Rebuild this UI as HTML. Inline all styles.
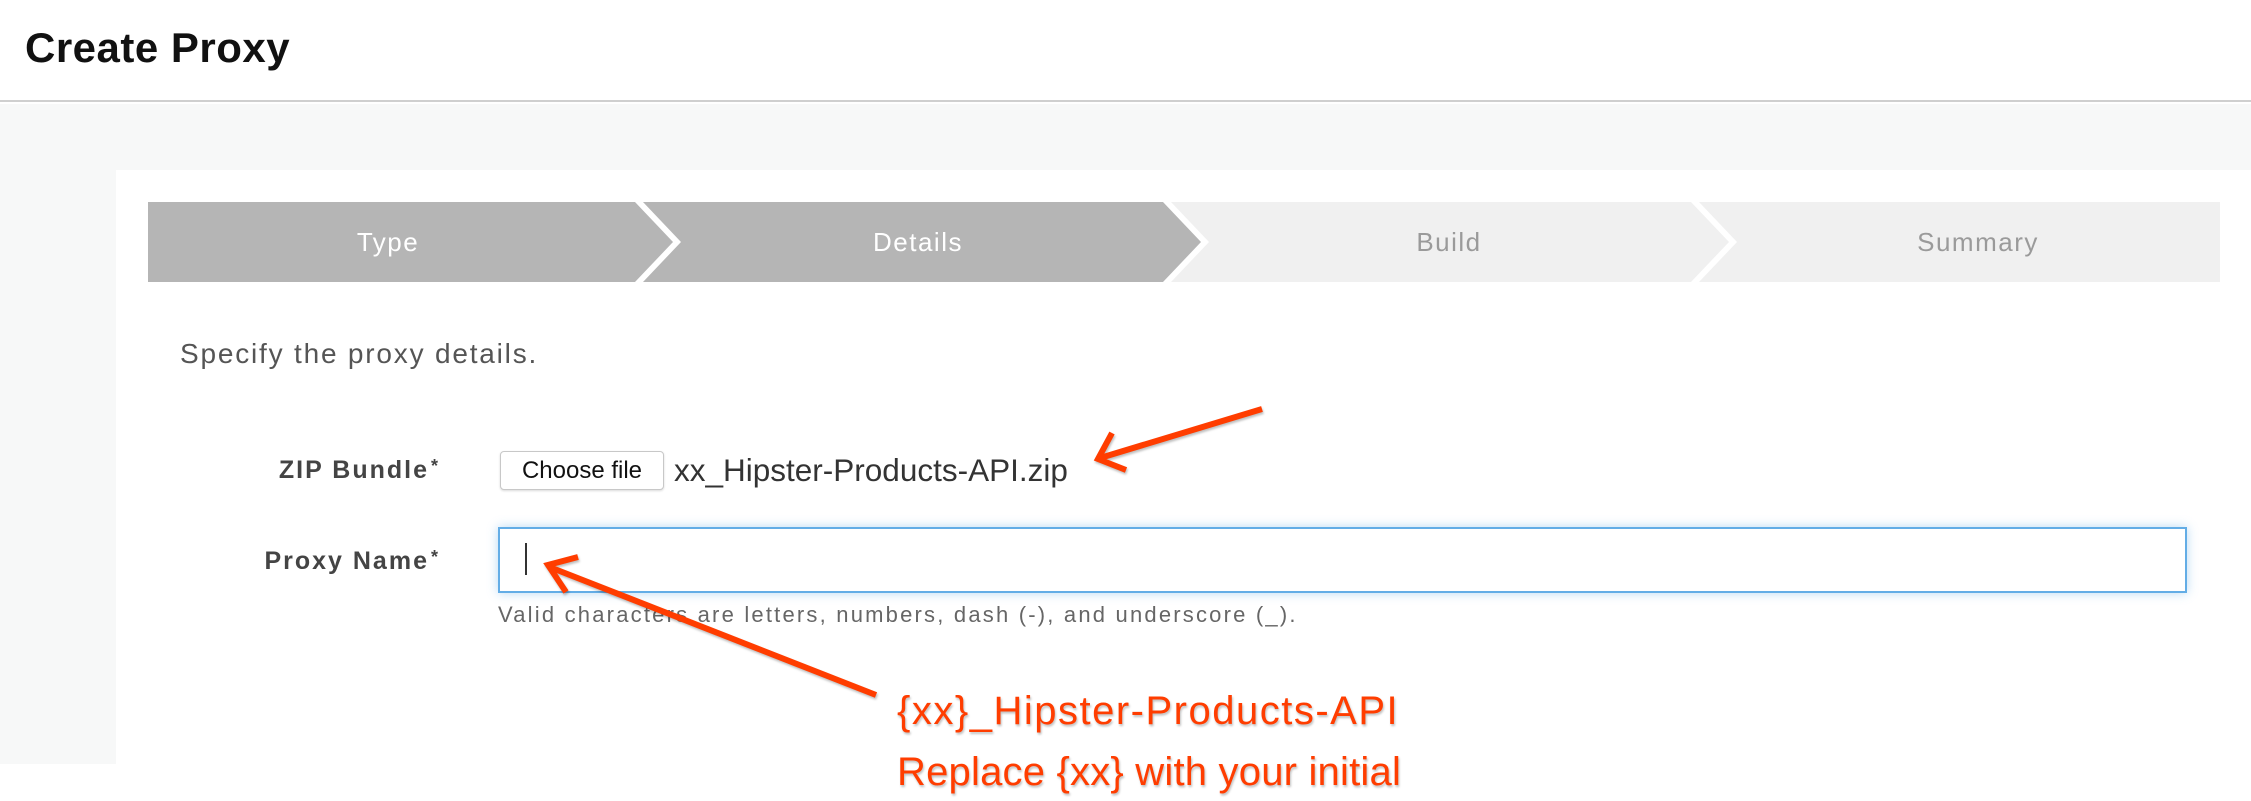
<!DOCTYPE html>
<html><head><meta charset="utf-8"><style>
*{margin:0;padding:0;box-sizing:border-box}
body{width:2251px;height:801px;background:#fff;position:relative;overflow:hidden;font-family:"Liberation Sans",sans-serif}
.hdr{position:absolute;left:0;top:0;width:2251px;height:102px;background:#fff;border-bottom:2px solid #cfcfcf}
.title{position:absolute;left:25px;top:24px;font-size:42px;font-weight:bold;color:#111;letter-spacing:0.5px}
.bg{position:absolute;left:0;top:104px;width:2251px;height:660px;background:#f7f8f8}
.panel{position:absolute;left:116px;top:170px;width:2135px;height:631px;background:#fff}
.t{position:absolute;white-space:nowrap}
.red{font-size:40px;color:#ff3d00;text-shadow:1px 2px 2px rgba(0,0,0,0.25);line-height:1}
</style></head><body>
<div class="hdr"><div class="title">Create Proxy</div></div>
<div class="bg"></div>
<div class="panel"></div>
<svg style="position:absolute;left:0;top:0" width="2251" height="801">
<polygon points="148,202 635,202 673,242 635,282 148,282" fill="#b5b5b5"/>
<polygon points="643,202 1163,202 1201,242 1163,282 643,282 681,242" fill="#b5b5b5"/>
<polygon points="1171,202 1691,202 1729,242 1691,282 1171,282 1209,242" fill="#f0f0f0"/>
<polygon points="1699,202 2220,202 2220,282 1699,282 1737,242" fill="#f0f0f0"/>
<g font-family="Liberation Sans, sans-serif" font-size="26" text-anchor="middle" letter-spacing="1.5">
<text x="388" y="251" fill="#fff">Type</text>
<text x="918" y="251" fill="#fff">Details</text>
<text x="1449" y="251" fill="#9a9a9a">Build</text>
<text x="1978" y="251" fill="#9a9a9a">Summary</text>
</g>
</svg>
<div class="t" style="left:180px;top:338px;font-size:28px;color:#555;letter-spacing:1.8px">Specify the proxy details.</div>
<div class="t" style="left:232px;top:456px;width:208px;text-align:right;font-size:25px;font-weight:bold;color:#444;letter-spacing:2px">ZIP Bundle<span style="font-size:18px;vertical-align:top;margin-left:2px">*</span></div>
<div class="t" style="left:232px;top:547px;width:208px;text-align:right;font-size:25px;font-weight:bold;color:#444;letter-spacing:2px">Proxy Name<span style="font-size:18px;vertical-align:top;margin-left:2px">*</span></div>
<div style="position:absolute;left:500px;top:451px;width:164px;height:39px;border:1px solid #c8c8c8;border-radius:4px;background:#fff;box-shadow:0 1px 2px rgba(0,0,0,0.15);font-size:24px;color:#111;text-align:center;line-height:37px">Choose file</div>
<div class="t" style="left:674px;top:452px;font-size:31.5px;color:#333">xx_Hipster-Products-API.zip</div>
<div style="position:absolute;left:498px;top:527px;width:1689px;height:66px;border:2px solid #63ade6;box-shadow:0 0 10px rgba(99,173,230,0.45);background:#fff"></div>
<div style="position:absolute;left:525px;top:543px;width:2px;height:32px;background:#333"></div>
<div class="t" style="left:498px;top:602px;font-size:22px;color:#666;letter-spacing:2.2px">Valid characters are letters, numbers, dash (-), and underscore (_).</div>
<svg style="position:absolute;left:0;top:0" width="2251" height="801">
<g stroke="#ff3d00" stroke-width="6" fill="none" stroke-linecap="butt" style="filter:drop-shadow(1px 2px 1px rgba(0,0,0,0.25))">
<line x1="1262" y1="409" x2="1100" y2="458"/>
<polyline points="1112,433 1098,459 1126,470"/>
<line x1="876" y1="695" x2="552" y2="568"/>
<polyline points="578,557 548,565 566,592"/>
</g>
</svg>
<div class="t red" style="left:897px;top:691px;letter-spacing:1.5px">{xx}_Hipster-Products-API</div>
<div class="t red" style="left:897px;top:752px;letter-spacing:0.2px">Replace {xx} with your initial</div>
</body></html>
